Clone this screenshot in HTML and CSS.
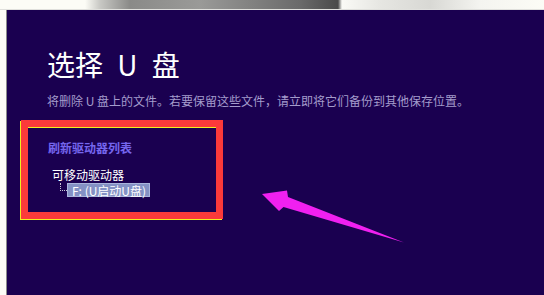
FILE: index.html
```html
<!DOCTYPE html>
<html lang="zh-CN">
<head>
<meta charset="utf-8">
<link rel="stylesheet" href="styles.css">
</head>
<body>
<div class="topstrip"></div>
<div class="main">
  <div class="edge"></div>
  <div class="panel">
    <h1 class="title">选择 U 盘</h1>
    <p class="subtitle">将删除 U 盘上的文件。若要保留这些文件，请立即将它们备份到其他保存位置。</p>
    <div class="refresh">刷新驱动器列表</div>
    <div class="tree">
      <div class="group">可移动驱动器</div>
      <div class="node">
        <span class="dots"></span>
        <span class="item">F: (U启动U盘)</span>
      </div>
    </div>
    <div class="redbox"></div>
    <svg class="arrow" width="544" height="295" viewBox="0 0 544 295">
      <polygon points="262,194 287,190.5 288,197 404,242.5 283.5,207 279,211" fill="#f020f0"/>
    </svg>
  </div>
</div>
</body>
</html>
```
FILE: styles.css
```css
html, body {
  margin: 0;
  padding: 0;
  width: 544px;
  height: 295px;
  overflow: hidden;
  background: #fcfcf6;
  font-family: "Noto Sans CJK SC", "Noto Sans", sans-serif;
}
.topstrip {
  height: 9px;
  background: linear-gradient(90deg, #fcfcf6 0px, #fcfcf6 85px, #c8c8c4 100px, #8a8a88 130px, #9a9a98 200px, #6a6a6a 300px, #4a4a4a 338px, #fafaf6 342px, #e6e6e2 380px, #d8d8d4 430px, #f4f4f0 480px, #fcfcf6 544px);
  border-bottom: 1px solid #e0e0dc;
}
.main {
  display: flex;
  height: 285px;
}
.edge {
  width: 6px;
  border-right: 1px solid #8a8a8a;
  background: #fcfcf6;
}
.panel {
  position: relative;
  flex: 1;
  background: #1a0050;
  padding: 37px 0 0 40px;
  box-sizing: border-box;
  color: #ffffff;
}
.title {
  margin: 0;
  font-weight: 400;
  font-size: 28px;
  line-height: 34px;
  word-spacing: 8px;
}
.subtitle {
  margin: 12px 0 0 0;
  font-size: 12px;
  line-height: 16px;
  color: #a49ccc;
}
.refresh {
  margin-top: 31px;
  margin-left: 1px;
  font-size: 12px;
  line-height: 16px;
  color: #7566ee;
  font-weight: 700;
}
.tree {
  margin-top: 11px;
  margin-left: 5px;
  font-size: 12px;
}
.group {
  line-height: 16px;
}
.node {
  display: flex;
  align-items: flex-start;
}
.dots {
  width: 7px;
  height: 8px;
  margin-left: 8px;
  border-left: 1px dotted #c8c8d8;
  border-bottom: 1px dotted #c8c8d8;
  box-sizing: border-box;
}
.item {
  display: inline-block;
  height: 14px;
  line-height: 13px;
  padding: 0 3px 0 4px;
  background: #8491c4;
  border: 1px solid #aab4dc;
  box-sizing: border-box;
  color: #ffffff;
  font-size: 12px;
}
.redbox {
  position: absolute;
  left: 14px;
  top: 110px;
  width: 202px;
  height: 99px;
  box-sizing: border-box;
  border: 7px solid #fb3a3a;
  box-shadow: -1px 1px 0 #f0f020, inset 0 1px 0 #f0f020;
}
.arrow {
  position: absolute;
  left: -7px;
  top: -10px;
}
```
